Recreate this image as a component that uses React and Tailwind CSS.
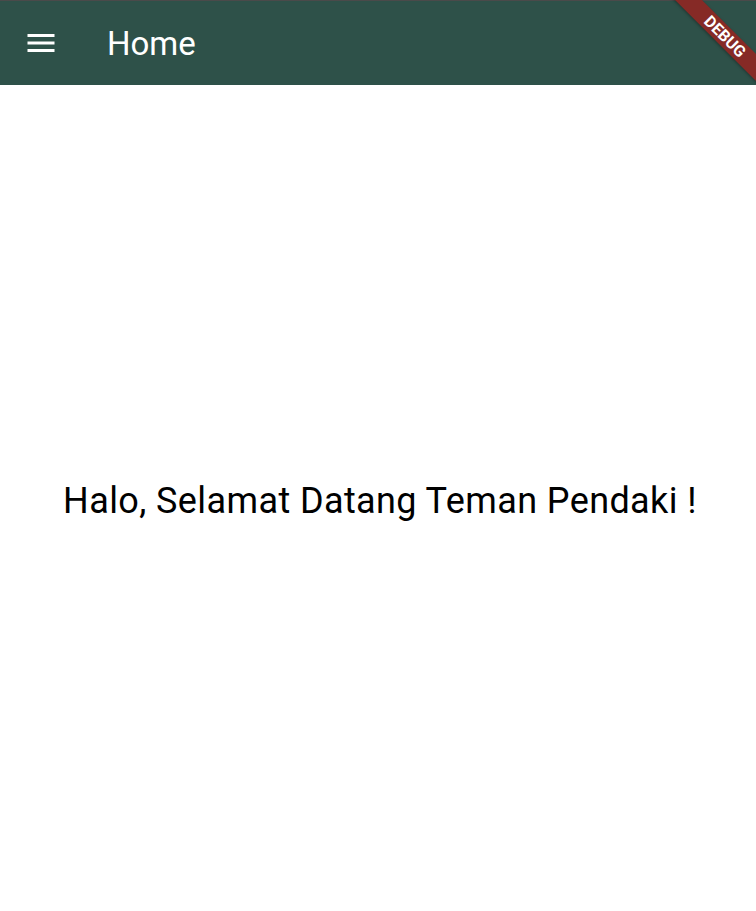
import React from 'react';

const MenuIcon = () => (
  <svg width="36" height="36" viewBox="0 0 24 24" fill="#ffffff">
    <path d="M3 18h18v-2H3v2zm0-5h18v-2H3v2zm0-7v2h18V6H3z" />
  </svg>
);

const App = () => {
  return (
    <div className="relative w-[756px] h-[911px] overflow-hidden bg-white font-['Roboto',sans-serif]">
      <header className="h-[85px] bg-[#2e5149] border-t border-[#4a4a4a] flex items-center">
        <button className="ml-[23px] w-[36px] h-[36px] flex items-center justify-center">
          <MenuIcon />
        </button>
        <h1 className="ml-[48px] text-[33px] text-white leading-none">Home</h1>
      </header>

      <main className="h-[826px] flex items-center justify-center">
        <p className="text-[36px] text-black leading-none tracking-[0.4px] pt-[5px] pl-[4px]">Halo, Selamat Datang Teman Pendaki !</p>
      </main>

      {/* debug banner */}
      <div className="absolute top-[27px] right-[-49px] w-[160px] h-[19px] rotate-45 bg-[#862a26] shadow-[0_1px_3px_rgba(0,0,0,0.35)] flex items-center justify-center">
        <span className="text-white text-[16px] font-bold leading-none">DEBUG</span>
      </div>
    </div>
  );
};

export default App;
